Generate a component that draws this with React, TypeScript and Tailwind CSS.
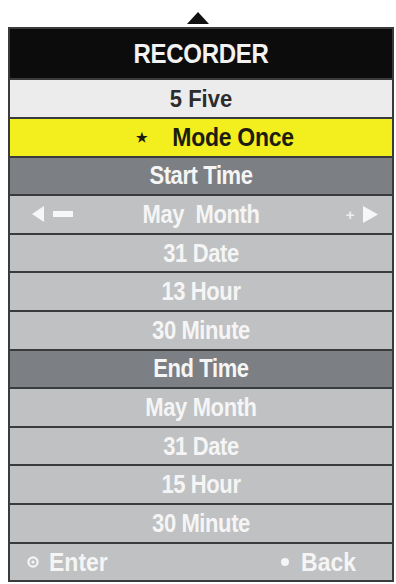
import React from 'react'

const rows: { label: string; kind: 'head' | 'item' | 'month' }[] = [
  { label: 'Start Time', kind: 'head' },
  { label: 'May  Month', kind: 'month' },
  { label: '31 Date', kind: 'item' },
  { label: '13 Hour', kind: 'item' },
  { label: '30 Minute', kind: 'item' },
  { label: 'End Time', kind: 'head' },
  { label: 'May Month', kind: 'item' },
  { label: '31 Date', kind: 'item' },
  { label: '15 Hour', kind: 'item' },
  { label: '30 Minute', kind: 'item' },
]

export default function App() {
  return (
    <div
      className="w-[396px] h-[584px] bg-white pt-[12px]"
      style={{ fontFamily: '"Liberation Sans", Arial, sans-serif' }}
    >
      {/* up arrow */}
      <div className="flex justify-center h-[15px]">
        <svg width="22" height="12" viewBox="0 0 22 12">
          <polygon points="11,0 22,12 0,12" fill="#111" />
        </svg>
      </div>

      <div className="ml-[8px] w-[386px] border-2 border-[#3a3b3d] bg-[#bfc1c3]">
        {/* title */}
        <div className="h-[49px] bg-[#0c0c0c] flex items-center justify-center text-[24px] font-bold text-[#f2f2f2] tracking-[-0.3px]">
          <span className="inline-block scale-y-[1.15]">RECORDER</span>
        </div>

        <div className="h-[39px] bg-[#ececec] border-t-2 border-[#3a3b3d] flex items-center justify-center text-[22px] font-bold text-[#2c2c2c]">
          <span className="inline-block scale-y-[1.12]">5 Five</span>
        </div>

        <div className="h-[38.6px] bg-[#f3ef1e] border-t-2 border-[#3a3b3d] flex items-center justify-center pl-[28px] gap-[24px] text-[23px] font-bold text-[#1c1c10]">
          <span className="text-[13px] leading-none">★</span>
          <span className="inline-block tracking-[-0.3px] scale-y-[1.12]">Mode Once</span>
        </div>

        {rows.map((r, i) => (
          <div
            key={i}
            className={`relative h-[38.6px] border-t-2 border-[#3a3b3d] flex items-center justify-center text-[22px] font-bold text-[#f5f5f5] tracking-[-0.4px] ${
              r.kind === 'head' ? 'bg-[#7c7f83]' : 'bg-[#bfc1c3]'
            }`}
          >
            {r.kind === 'month' && (
              <div className="absolute left-[22px] top-0 h-full flex items-center gap-[9px]">
                <svg width="12" height="16" viewBox="0 0 12 16">
                  <polygon points="0,8 12,0 12,16" fill="#f7f7f7" />
                </svg>
                <div className="w-[20px] h-[6px] bg-[#f7f7f7]" />
              </div>
            )}
            <span className="inline-block whitespace-pre scale-y-[1.15]">{r.label}</span>
            {r.kind === 'month' && (
              <div className="absolute right-[14px] top-0 h-full flex items-center gap-[9px]">
                <span className="text-[15px] leading-none text-[#eeeeee]">+</span>
                <svg width="15" height="17" viewBox="0 0 15 17">
                  <polygon points="0,0 15,8.5 0,17" fill="#f7f7f7" />
                </svg>
              </div>
            )}
          </div>
        ))}

        {/* footer */}
        <div className="h-[38.6px] border-t-2 border-[#3a3b3d] bg-[#bfc1c3] flex items-center justify-between pl-[17px] pr-[36px] text-[23px] font-bold text-[#f5f5f5]">
          <div className="flex items-center gap-[10px]">
            <svg width="12" height="12" viewBox="0 0 12 12">
              <circle cx="6" cy="6" r="4.6" fill="none" stroke="#f5f5f5" strokeWidth="2.2" />
              <circle cx="6" cy="6" r="1.6" fill="#f5f5f5" />
            </svg>
            <span className="inline-block scale-y-[1.12]">Enter</span>
          </div>
          <div className="flex items-center gap-[12px]">
            <span className="w-[8px] h-[8px] rounded-full bg-[#f5f5f5]" />
            <span className="inline-block scale-y-[1.12]">Back</span>
          </div>
        </div>
      </div>
    </div>
  )
}
